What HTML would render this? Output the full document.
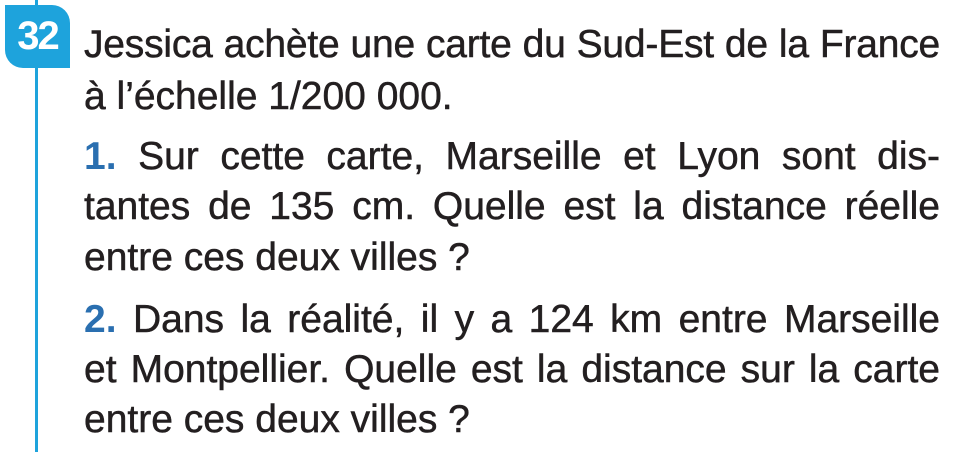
<!DOCTYPE html>
<html><head><meta charset="utf-8"><style>
html,body{margin:0;padding:0;background:#fff;width:954px;height:452px;overflow:hidden;position:relative}
.vl{position:absolute;left:35px;top:0;width:3px;height:452px;background:#1ea3dc}
.badge{position:absolute;left:5px;top:5px;width:65px;height:63px;background:#1ea3dc;border-radius:0 18px 0 18px;color:#fff;font:bold 40px "Liberation Sans",sans-serif;text-align:center;line-height:63px;letter-spacing:-2px}
.l{position:absolute;left:84px;width:856px;font:39px/50px "Liberation Sans",sans-serif;color:#231f20;-webkit-text-stroke:0.5px #231f20;text-align:justify;text-align-last:justify;white-space:nowrap}
.l.n{text-align-last:left}
b{color:#2a6fb0;-webkit-text-stroke:0}
</style></head><body>
<div class="vl"></div>
<div class="badge">32</div>
<div class="l" style="top:20px;letter-spacing:-0.2px;word-spacing:-1px">Jessica achète une carte du Sud-Est de la France</div>
<div class="l n" style="top:72px">à l’échelle 1/200 000.</div>
<div class="l" style="top:132px"><b>1.</b> Sur cette carte, Marseille et Lyon sont dis-</div>
<div class="l" style="top:182px">tantes de 135 cm. Quelle est la distance réelle</div>
<div class="l n" style="top:233px">entre ces deux villes ?</div>
<div class="l" style="top:295px"><b>2.</b> Dans la réalité, il y a 124 km entre Marseille</div>
<div class="l" style="top:345px">et Montpellier. Quelle est la distance sur la carte</div>
<div class="l n" style="top:395px">entre ces deux villes ?</div>
</body></html>
